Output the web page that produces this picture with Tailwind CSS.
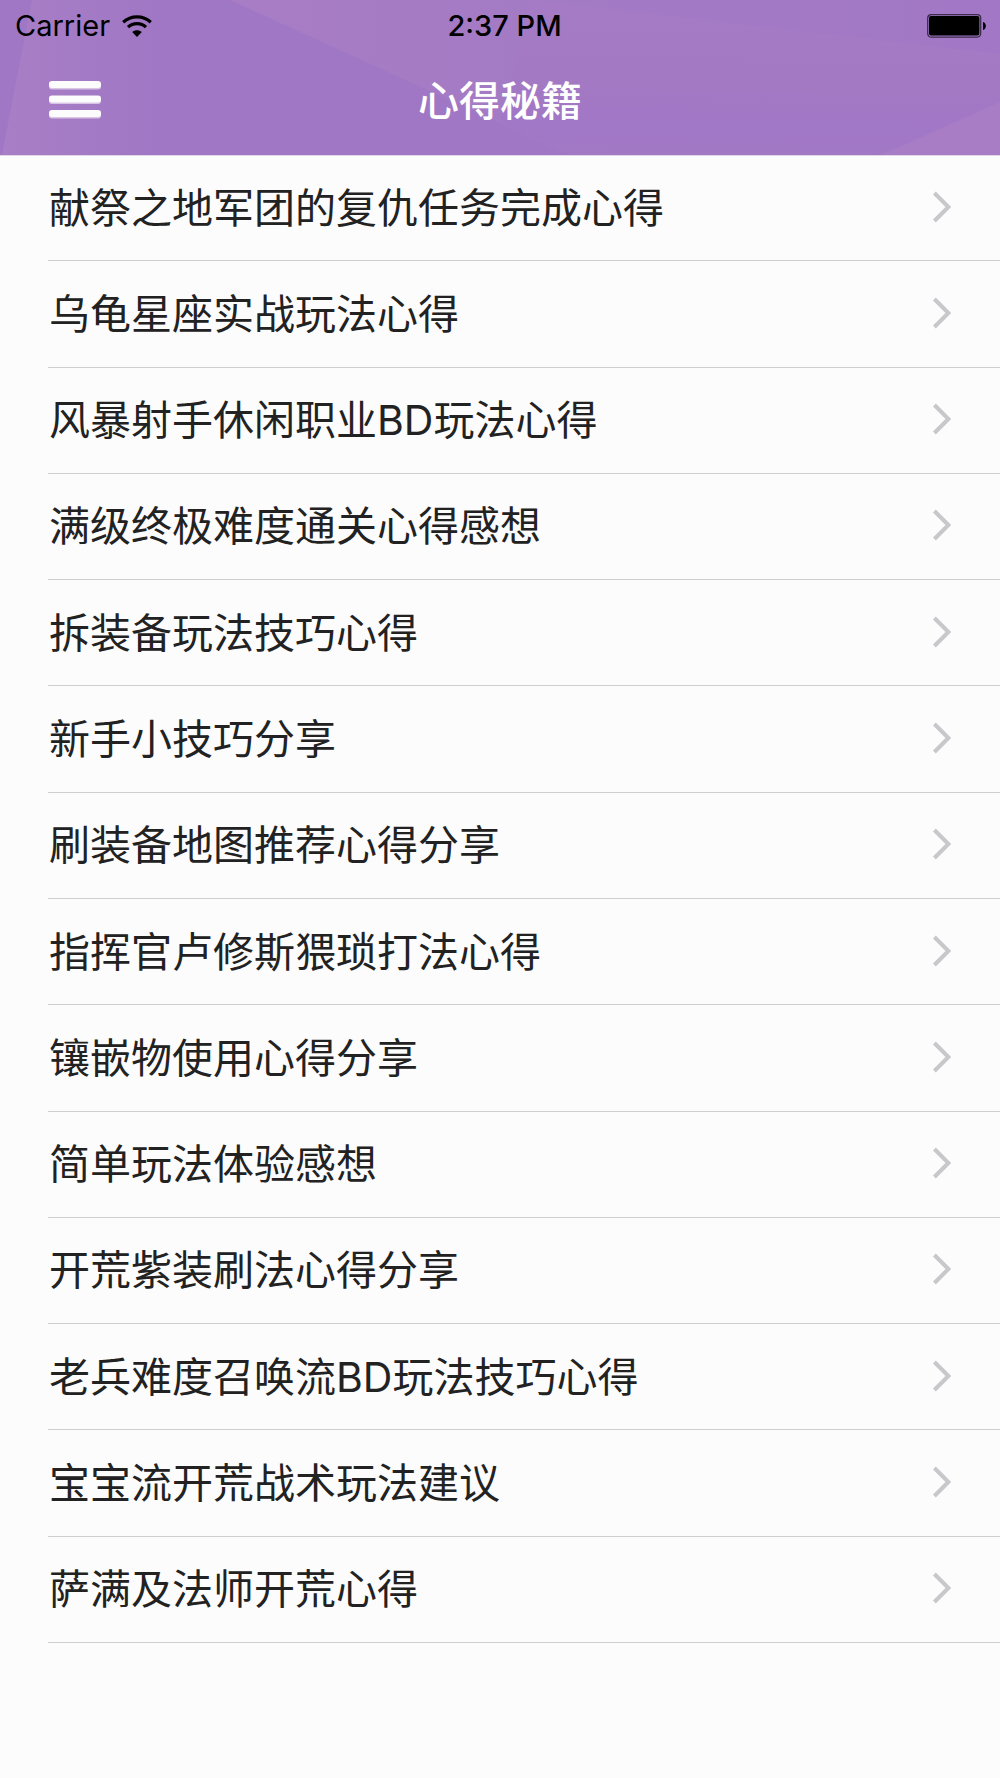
<!DOCTYPE html>
<html lang="zh-CN">
<head>
	<meta charset="UTF-8">
	<meta name="viewport" content="width=device-width, initial-scale=1.0">
	<title>心得秘籍</title>
	<script src="https://cdn.jsdelivr.net/npm/@tailwindcss/browser@4"></script>
</head>
<body class="min-h-screen bg-[#fcfcfc] font-['Inter','Noto_Sans_CJK_SC',sans-serif] text-[#222222]">
	<header class="relative bg-[#a077c4] shadow-[0_1px_0_#e0d6e8]">
		<!-- low-poly facets -->
		<svg class="absolute inset-0 w-full h-full" viewBox="0 0 1000 155" preserveAspectRatio="none" aria-hidden="true">
			<defs>
				<linearGradient id="left" x1="0" y1="0" x2="1" y2="0">
					<stop offset="0" stop-color="#a87ec6"/>
					<stop offset="0.6" stop-color="#a077c4"/>
					<stop offset="1" stop-color="#a077c4"/>
				</linearGradient>
				<linearGradient id="mid" x1="0" y1="0" x2="1" y2="0">
					<stop offset="0" stop-color="#a87dc5"/>
					<stop offset="0.4" stop-color="#a37ac4"/>
					<stop offset="1" stop-color="#a278c6"/>
				</linearGradient>
				<linearGradient id="band" x1="0" y1="0" x2="-0.05" y2="1">
					<stop offset="0" stop-color="#a57bc5"/>
					<stop offset="0.55" stop-color="#a379c4"/>
					<stop offset="0.8" stop-color="#a177c7"/>
					<stop offset="1" stop-color="#a279c4"/>
				</linearGradient>
			</defs>
			<polygon points="32,0 260,0 240,155 2,155" fill="url(#left)"/>
			<polygon points="230,0 1000,0 1000,155 570,155 340,50" fill="url(#mid)"/>
			<polygon points="530,0 1000,54 1000,155 570,155 500,122" fill="url(#band)"/>
			<polygon points="1000,102 1000,155 881,155" fill="#a87dc5"/>
		</svg>

		<div class="relative grid grid-cols-3 items-center h-[51px] pl-[15px] pr-[14px] text-[29px] leading-8 text-black">
			<div class="flex items-center gap-3">
				<span>Carrier</span>
				<svg class="w-[30px] h-[22px]" viewBox="0 0 30 22" fill="none" stroke="#000" stroke-width="3.2" aria-label="Wi-Fi">
					<path d="M1.2 7.2C9 0 21 0 28.8 7.2"/>
					<path d="M6 12.2C11 7.4 19 7.4 24 12.2"/>
					<path d="M15 22L10.2 17C13 14.6 17 14.6 19.8 17Z" fill="#000" stroke="none"/>
				</svg>
			</div>
			<div class="pl-2 text-center font-medium">2:37 PM</div>
			<svg class="justify-self-end w-[59px] h-6" viewBox="0 0 59 24" aria-label="Battery">
				<rect x="0.7" y="0.7" width="53" height="22.4" rx="3.5" fill="none" stroke="#3a2b48" stroke-width="1.2"/>
				<rect x="2" y="2" width="50.4" height="19.6" rx="2" fill="#000"/>
				<path d="M56 8C59.8 9 59.8 15 56 16Z" fill="#000"/>
			</svg>
		</div>

		<div class="relative grid grid-cols-3 items-center h-[104px] px-12 pb-1">
			<button type="button" class="justify-self-start mb-1 cursor-pointer" aria-label="菜单">
				<svg class="block w-[54px] h-[39px]" viewBox="0 0 54 39">
					<g fill="#d9c6e6">
						<rect x="1" y="2" width="52" height="7.5" rx="3"/>
						<rect x="1" y="16.5" width="52" height="7.5" rx="3"/>
						<rect x="1" y="31" width="52" height="7.5" rx="3"/>
					</g>
					<g fill="#fcfcfc">
						<rect x="1" y="1" width="52" height="7" rx="3"/>
						<rect x="1" y="15.5" width="52" height="7" rx="3"/>
						<rect x="1" y="30" width="52" height="7" rx="3"/>
					</g>
				</svg>
			</button>
			<h1 class="text-center text-[41px] leading-[60px] font-medium text-white whitespace-nowrap">心得秘籍</h1>
		</div>
	</header>

	<main>
		<ul id="list" class="grid auto-rows-fr min-h-[1488px] pl-12"></ul>
	</main>
</body>
<script>
const titles = [
	'献祭之地军团的复仇任务完成心得',
	'乌龟星座实战玩法心得',
	'风暴射手休闲职业BD玩法心得',
	'满级终极难度通关心得感想',
	'拆装备玩法技巧心得',
	'新手小技巧分享',
	'刷装备地图推荐心得分享',
	'指挥官卢修斯猥琐打法心得',
	'镶嵌物使用心得分享',
	'简单玩法体验感想',
	'开荒紫装刷法心得分享',
	'老兵难度召唤流BD玩法技巧心得',
	'宝宝流开荒战术玩法建议',
	'萨满及法师开荒心得'
]

const $list = document.getElementById('list')

titles.forEach(title => {
	$list.insertAdjacentHTML('beforeend', `
		<li class="border-b border-[#cfcfd1]">
			<a href="#" class="flex items-center justify-between h-full pl-px pr-12">
				<span class="text-[41px] leading-[60px]">${title}</span>
				<svg class="shrink-0 mb-0.5 w-5 h-8" viewBox="0 0 20 32" fill="none" stroke="#c7c7cc" stroke-width="4" aria-hidden="true">
					<path d="M2.4 2L16.4 16L2.4 30"/>
				</svg>
			</a>
		</li>`)
})
</script>
</html>
